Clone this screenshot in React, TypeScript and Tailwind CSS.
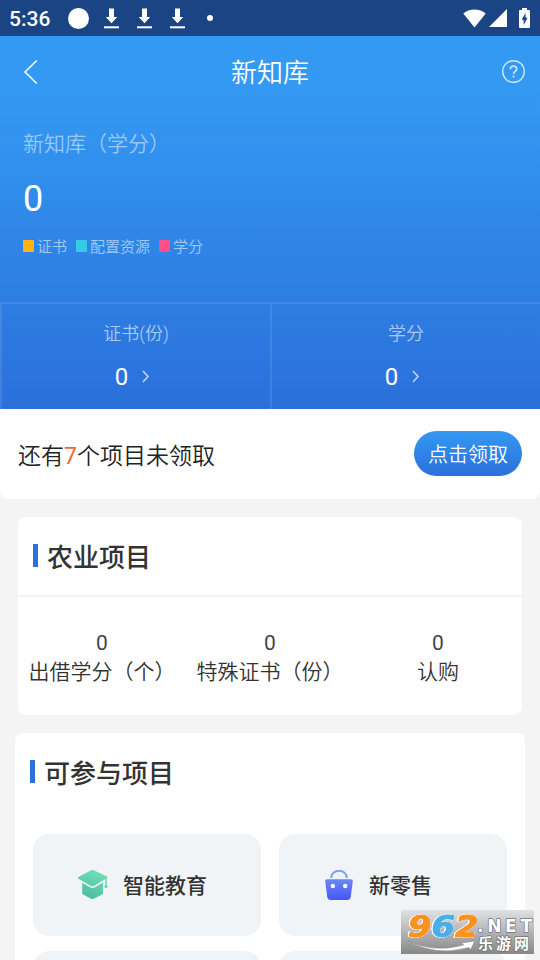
import type { ReactNode } from "react";

interface LegendItem {
  label: string;
  swatch: string;
}

interface Stat {
  label: string;
  value: number;
}

const legend: LegendItem[] = [
  { label: "证书", swatch: "bg-[#ffb310]" },
  { label: "配置资源", swatch: "bg-[#35cbe6]" },
  { label: "学分", swatch: "bg-[#ff4f86]" },
];

const accountStats: Stat[] = [
  { label: "证书(份)", value: 0 },
  { label: "学分", value: 0 },
];

const farmStats: Stat[] = [
  { label: "出借学分（个）", value: 0 },
  { label: "特殊证书（份）", value: 0 },
  { label: "认购", value: 0 },
];

function DownloadIcon() {
  return (
    <svg width="15" height="21" viewBox="0 0 15 21" fill="#fff">
      <path d="M5 0.5h5v8.5h3.2L7.5 15.2 1.8 9H5z" />
      <rect y="18.3" width="15" height="2" />
    </svg>
  );
}

function StatusBar() {
  return (
    <div className="flex h-9 items-center justify-between bg-[#1b4485] pl-[9px] pr-[10px] text-white">
      <div className="flex items-center">
        <span className="w-[59px] pt-px text-[21px] font-medium leading-9">5:36</span>
        <span className="size-[21px] rounded-full bg-white" />
        <div className="ml-[15px] flex gap-[18px]">
          <DownloadIcon />
          <DownloadIcon />
          <DownloadIcon />
        </div>
        <span className="ml-[22px] size-1.5 rounded-full bg-white" />
      </div>
      <div className="flex items-center">
        <svg width="23" height="19" viewBox="0 0 23 19" fill="#fff">
          <path d="M0.3 4.6C3.4 2 7.2 0.6 11.5 0.6s8.1 1.4 11.2 4L11.5 18.4z" />
        </svg>
        <svg width="18" height="18" viewBox="0 0 18 18" fill="#fff" className="ml-[3px]">
          <path d="M18 0v18H0z" />
        </svg>
        <svg width="11" height="20" viewBox="0 0 11 20" className="ml-3">
          <path d="M3 0h5v2h2q1 0 1 1v16q0 1-1 1H1q-1 0-1-1V3q0-1 1-1h2z" fill="#fff" />
          <path d="M6.6 5v4.8h2L4.6 17v-5.2h-2z" fill="#1b4485" />
        </svg>
      </div>
    </div>
  );
}

function NavBar() {
  return (
    <div className="flex h-[71px] items-center justify-between pl-6 pr-[15px] text-white">
      <svg width="14" height="24" viewBox="0 0 14 24" fill="none" stroke="#fff" strokeWidth="1.5">
        <path d="M12.8 0.5 1 12l11.8 11.5" />
      </svg>
      <h1 className="pt-[3px] text-[26px] font-[350] leading-[38px]">新知库</h1>
      <svg width="23" height="23" viewBox="0 0 23 23" fill="none" stroke="#fff" strokeOpacity="0.75" strokeWidth="1.4">
        <circle cx="11.5" cy="11.5" r="10.8" />
        <path d="M8.3 9.2q0-3 3.2-3t3.2 2.8q0 1.5-1.6 2.5-1.6 1-1.6 2.4" strokeWidth="1.7" />
        <path d="M11.5 15.4v2" strokeWidth="1.8" />
      </svg>
    </div>
  );
}

function Overview() {
  return (
    <section className="flex h-[373px] flex-col bg-linear-to-b from-[#3499f2] from-15% to-[#2b6fdb]">
      <NavBar />
      <div className="flex h-[195px] flex-col pl-[23px] pt-[22px]">
        <p className="text-[21px] font-[350] leading-[30px] text-white/50">新知库（学分）</p>
        <p className="mt-[18px] text-[36px] leading-[44px] text-white">0</p>
        <div className="mt-[13px] flex gap-[9px]">
          {legend.map((item) => (
            <div key={item.label} className="flex items-center gap-[3px]">
              <span className={`h-3 w-[11px] ${item.swatch}`} />
              <span className="pt-0.5 text-[15px] font-[350] leading-[22px] text-white/55">{item.label}</span>
            </div>
          ))}
        </div>
      </div>
      <div className="grid flex-1 grid-cols-2">
        {accountStats.map((stat) => (
          <div key={stat.label} className="flex flex-col items-center border-l-2 border-t-2 border-white/10 pt-[17px]">
            <p className="text-[18px] font-[350] leading-[26px] text-white/60">{stat.label}</p>
            <p className="mt-[14px] flex items-center pr-[7px] text-[24px] leading-8 text-white">
              {stat.value}
              <svg width="8" height="13" viewBox="0 0 8 13" fill="none" stroke="#fff" strokeOpacity="0.7" strokeWidth="1.6" className="mb-0.5 ml-[14px]">
                <path d="M1 1l5 5.5L1 12" />
              </svg>
            </p>
          </div>
        ))}
      </div>
    </section>
  );
}

function ClaimBar() {
  return (
    <div className="bg-[#f4f4f4]">
      <div className="flex h-[90px] items-start justify-between rounded-b-lg bg-white px-[18px] pt-[22px]">
        <p className="pt-[10px] text-[23px] font-[350] leading-8 text-[#222]">
          还有<span className="font-normal text-[#f2672f]">7</span>个项目未领取
        </p>
        <button className="h-[45px] w-[108px] rounded-full bg-linear-to-b from-[#3499f2] to-[#2b6fdb] pt-0.5 text-[20px] font-[350] text-white">
          点击领取
        </button>
      </div>
    </div>
  );
}

function SectionTitle({ children }: { children: ReactNode }) {
  return (
    <div className="flex h-[78px] items-center gap-[9px] pl-[15px]">
      <span className="mb-0.5 h-[23px] w-[5px] bg-[#2d70dc]" />
      <h2 className="pt-[3px] text-[26px] font-medium leading-[38px] text-[#333]">{children}</h2>
    </div>
  );
}

function FarmCard() {
  return (
    <section className="mx-[18px] mt-[18px] h-[198px] rounded-lg bg-white">
      <SectionTitle>农业项目</SectionTitle>
      <div className="grid grid-cols-3 border-t-2 border-[#f4f4f7] pt-8 text-[21px] text-[#444]">
        {farmStats.map((stat) => (
          <div key={stat.label} className="text-center">
            <p className="leading-7">{stat.value}</p>
            <p className="whitespace-nowrap font-[350] leading-[30px] text-[#333]">{stat.label}</p>
          </div>
        ))}
      </div>
    </section>
  );
}

function EducationIcon() {
  return (
    <svg width="30" height="30" viewBox="0 0 30 30">
      <defs>
        <linearGradient id="edu-cap" gradientUnits="userSpaceOnUse" x1="22" y1="2" x2="10" y2="28">
          <stop offset="0" stopColor="#6fe0b4" />
          <stop offset="1" stopColor="#4abda4" />
        </linearGradient>
      </defs>
      <g fill="url(#edu-cap)">
        <path d="M13.2 0.3q1.3-.6 2.6 0L28.7 6.3q1.4.9 0 1.9L16 16.1q-1.5.8-3 0L.5 8.8q-1.2-.9 0-1.8z" />
        <path d="M4.2 12.7l8.7 5.1q1.6.9 3.2 0l8.9-5.2V23q0 1-.9 1.5l-8.4 4.3q-1.2.6-2.4 0l-8.3-4.4Q4.2 24 4.2 23z" />
        <path d="M27.3 8h1.5v6.5l1 2.7q-1.7 1.3-3.6 0l1.1-2.7z" />
      </g>
    </svg>
  );
}

function RetailIcon() {
  return (
    <svg width="30" height="30" viewBox="0 0 30 30">
      <defs>
        <linearGradient id="retail-bag" x1="0" y1="0" x2="0" y2="1">
          <stop offset="0" stopColor="#6889f7" />
          <stop offset="1" stopColor="#4855f6" />
        </linearGradient>
      </defs>
      <path d="M7.3 8V7.6a7.7 6.8 0 0 1 15.4 0V8" fill="none" stroke="#7c9cf8" strokeWidth="2" />
      <path d="M3 9.3h24q2 0 1.8 2l-2 15.2q-.5 3.5-3.7 3.5H6.9q-3.2 0-3.7-3.5l-2-15.2q-.2-2 1.8-2z" fill="url(#retail-bag)" />
      <circle cx="8.8" cy="16" r="2.2" fill="#fff" />
      <circle cx="21.2" cy="16" r="2.2" fill="#fff" />
    </svg>
  );
}

function ProjectTile({ icon, label }: { icon: ReactNode; label: string }) {
  return (
    <div className="flex h-[102px] items-center gap-[15px] rounded-2xl bg-[#f0f4f7] pl-[45px] text-[21px] font-medium text-[#333]">
      {icon}
      <span className="pt-[3px]">{label}</span>
    </div>
  );
}

function ProjectsCard() {
  return (
    <section className="mx-[15px] mt-[18px] rounded-t-lg bg-white">
      <SectionTitle>可参与项目</SectionTitle>
      <div className="grid grid-cols-2 gap-x-[18px] gap-y-[15px] px-[18px] pt-[23px]">
        <ProjectTile icon={<EducationIcon />} label="智能教育" />
        <ProjectTile icon={<RetailIcon />} label="新零售" />
        <div className="h-[102px] rounded-2xl bg-[#f0f4f7]" />
        <div className="h-[102px] rounded-2xl bg-[#f0f4f7]" />
      </div>
    </section>
  );
}

// Site badge that floats over the bottom right corner
function SiteBadge() {
  return (
    <svg width="133" height="50" viewBox="0 -6 133 50" className="absolute bottom-1.5 right-1.5">
      <defs>
        <linearGradient id="badge-bg" x1="0" y1="0" x2="0" y2="1">
          <stop offset="0" stopColor="#dfe2e4" />
          <stop offset="1" stopColor="#878787" />
        </linearGradient>
      </defs>
      <rect width="133" height="44" fill="url(#badge-bg)" />
      <path d="M6.7 30.500q25 13 56 4.500l-2-2 13-2-4 8.500-2-2Q34 47 6.700 30.500z" fill="#fff" stroke="#888" strokeWidth="0.5" />
      <g
        className="[filter:drop-shadow(0.7px_0_0_#fff)_drop-shadow(-0.7px_0_0_#fff)_drop-shadow(0_0.7px_0_#fff)]"
        fontFamily="DejaVu Sans"
        fontWeight="700"
        fontStyle="italic"
        fontSize="31"
        strokeWidth="1"
        strokeLinejoin="round"
      >
        <text x="7" y="26.5" textLength="23.5" lengthAdjust="spacingAndGlyphs" fill="#f7931e" stroke="#f7931e">9</text>
        <text x="30.5" y="26.5" textLength="23.5" lengthAdjust="spacingAndGlyphs" fill="#4aaee8" stroke="#4aaee8">6</text>
        <text x="54" y="26.5" textLength="23.5" lengthAdjust="spacingAndGlyphs" fill="#f7931e" stroke="#f7931e">2</text>
      </g>
      <g fill="#fff" stroke="#777" strokeWidth="1.5" strokeLinejoin="round" paintOrder="stroke">
        <text x="76" y="22" fontFamily="DejaVu Sans" fontWeight="700" fontSize="17" textLength="55" lengthAdjust="spacing">.NET</text>
        <text x="77" y="39" fontFamily="Noto Sans CJK SC" fontWeight="700" fontSize="15" textLength="51">乐游网</text>
      </g>
    </svg>
  );
}

export default function App() {
  return (
    <main lang="zh-CN" className="relative h-[960px] w-[540px] overflow-hidden bg-[#f4f4f4] font-[Roboto,'Noto_Sans_CJK_SC',sans-serif]">
      <StatusBar />
      <Overview />
      <ClaimBar />
      <FarmCard />
      <ProjectsCard />
      <SiteBadge />
    </main>
  );
}
